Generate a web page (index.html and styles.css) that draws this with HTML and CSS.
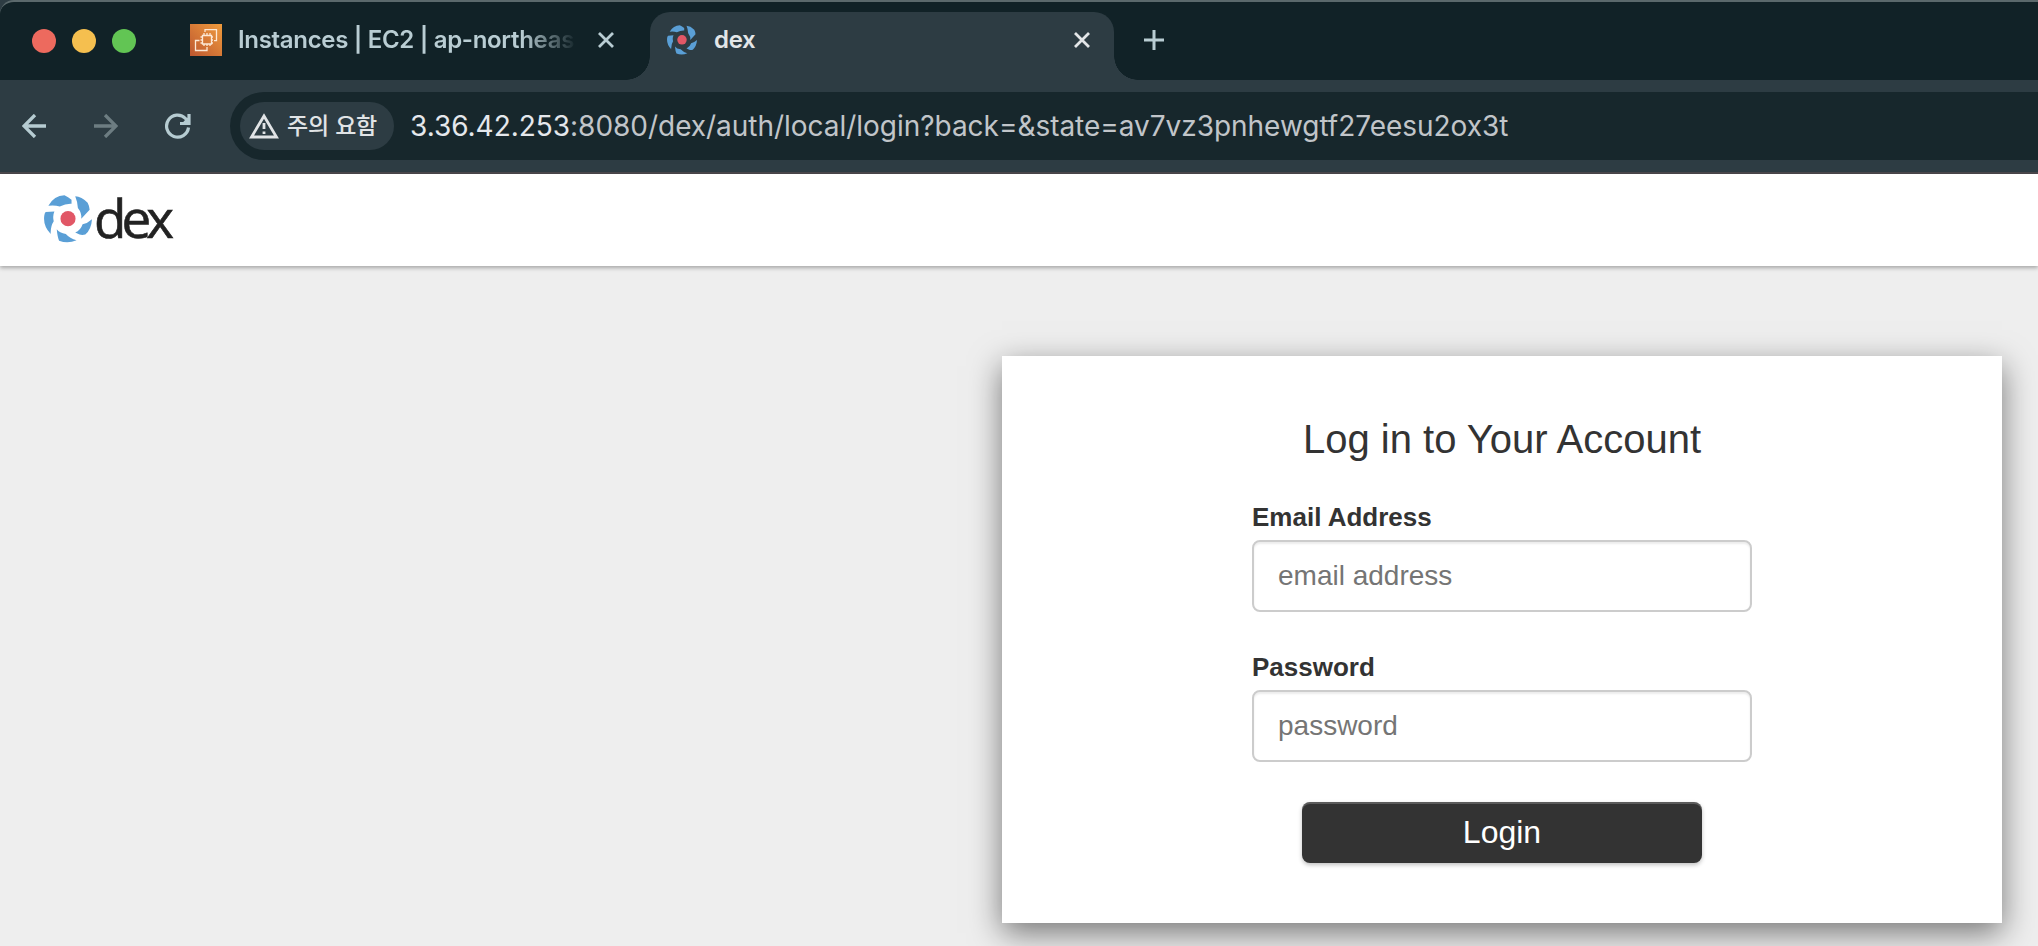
FILE: index.html
```html
<!DOCTYPE html>
<html lang="ko">
<head>
<meta charset="utf-8">
<title>dex</title>
<link rel="stylesheet" href="styles.css">
</head>
<body>
<svg width="0" height="0" class="defs" aria-hidden="true">
  <symbol id="dex-mark" viewBox="132 107 143 141">
    <g fill="#5a9fd6">
      <path d="M145 138Q162 108 193 107Q204 112 214 120L214 132Q197 131 179 140Q164 136 145 138Z"/>
      <path d="M225 110Q244 111 262 129Q267 138 268 150L243 177Q245 160 233 145Q232 127 225 110Z"/>
      <path d="M275 178Q273 208 255 224Q246 226 238 224L225 218Q241 211 247 193Q262 190 275 178Z"/>
      <path d="M229 241Q202 252 177 242Q172 231 170 208Q178 219 197 222Q209 235 229 241Z"/>
      <path d="M152 222Q128 197 133 166Q134 160 137 157L163 155Q157 168 161 184Q151 199 152 222Z"/>
    </g>
    <circle cx="203.500" cy="176.500" r="22.500" fill="#e15766"/>
  </symbol>
</svg>

<header class="browser">
  <div class="tabs">
    <div class="lights"><i class="red"></i><i class="yellow"></i><i class="green"></i></div>
    <div class="tab">
      <svg class="favicon" viewBox="0 0 32 32">
        <defs><linearGradient id="ec2" x1="0" y1="1" x2="1" y2="0"><stop stop-color="#bd5730"/><stop offset="1" stop-color="#f09c3d"/></linearGradient></defs>
        <path fill="url(#ec2)" d="M0 0h32v32H0z"/>
        <g fill="none" stroke="#fce8d5" stroke-width="1.300">
          <path d="M12.500 11.500h9v8.500h-9z"/>
          <path d="M14 11V9M17 11V9M20 11V9M14 20v2M17 20v2M20 20v2M12 13h-1.500M12 16h-1.500M12 19h-1.500M21.500 13H23M21.500 16H23M21.500 19H23"/>
          <path d="M15 8V5.700h11.500v11H24M9.500 16.500h-4v10H17v-3.500"/>
        </g>
      </svg>
      <span class="tab-title">Instances | EC2 | ap-northeas</span>
      <svg class="close" viewBox="0 0 16 16"><path d="M1 1l14 14M15 1L1 15"/></svg>
    </div>
    <div class="tab active">
      <svg class="swirl"><use href="#dex-mark"/></svg>
      <span class="tab-title">dex</span>
      <svg class="close" viewBox="0 0 16 16"><path d="M1 1l14 14M15 1L1 15"/></svg>
    </div>
    <svg class="plus" viewBox="0 0 20 20"><path d="M10 0v20M0 10h20"/></svg>
  </div>
  <div class="toolbar">
    <svg class="nav" viewBox="0 0 24 24"><path d="M24 12H2M13 1L2 12l11 11"/></svg>
    <svg class="nav forward" viewBox="0 0 24 24"><path d="M0 12h22M11 1l11 11-11 11"/></svg>
    <svg class="reload" viewBox="0 0 26 26"><path d="M23.500 14.500A11 11 0 1 1 20.500 5.500l3 3.500M24 1v9.500H15M19.500 10l4-4"/></svg>
    <div class="address">
      <div class="chip">
        <svg viewBox="0 0 30 26"><path d="M15 3L27.500 24h-25z"/><path d="M15 10v6M15 18.500v2.500"/></svg>
        <span>주의 요함</span>
      </div>
      <div class="url"><span class="host">3.36.42.253</span><span class="path">:8080/dex/auth/local/login?back=&amp;state=av7vz3pnhewgtf27eesu2ox3t</span></div>
    </div>
  </div>
</header>

<nav class="navbar">
  <svg class="mark"><use href="#dex-mark"/></svg>
  <span class="wordmark">dex</span>
</nav>

<main class="page">
  <form class="card">
    <h1>Log in to Your Account</h1>
    <div class="field">
      <label for="login">Email Address</label>
      <input id="login" type="text" placeholder="email address">
    </div>
    <div class="field">
      <label for="password">Password</label>
      <input id="password" type="password" placeholder="password">
    </div>
    <button type="button">Login</button>
  </form>
</main>
</body>
</html>
```
FILE: styles.css
```css
* { box-sizing: border-box; }
body {
  margin: 0;
  height: 946px;
  overflow: hidden;
  background: #eee;
  color: #333;
  font-family: "Liberation Sans", Arial, sans-serif;
}
svg { display: block; flex: none; }
.defs { position: absolute; }

.browser {
  height: 174px;
  background: #2d3c43;
  border-bottom: 2px solid #4a474b;
  font-family: Inter, "Noto Sans CJK KR", sans-serif;
}
.tabs {
  display: flex;
  height: 80px;
  padding: 10px 0 0 32px;
  background: #112227;
  border-top: 2px solid #5b696c;
  border-top-left-radius: 14px;
}
.lights { display: flex; gap: 16px; padding-top: 17px; }
.lights i { width: 24px; height: 24px; border-radius: 50%; }
.red { background: #ed6a5e; }
.yellow { background: #f5bf4f; }
.green { background: #62c554; }

.tab {
  display: flex;
  align-items: center;
  width: 460px;
  height: 68px;
  margin-left: 54px;
  padding-bottom: 12px;
  color: #b9cdd3;
}
.favicon { width: 32px; height: 32px; }
.tab-title {
  width: 346px;
  margin: 0 14px 0 16px;
  white-space: nowrap;
  font-size: 24px;
  line-height: 32px;
  font-weight: 600;
  letter-spacing: -0.320px;
  -webkit-mask-image: linear-gradient(90deg, #000 82%, transparent 98%);
  mask-image: linear-gradient(90deg, #000 82%, transparent 98%);
}
.close { width: 16px; height: 16px; fill: none; stroke: currentColor; stroke-width: 2.800; }
.active {
  position: relative;
  width: 464px;
  margin-left: 0;
  padding-left: 17px;
  background: #2d3c43;
  border-radius: 20px 20px 0 0;
  color: #e3e6e8;
}
.active::before,
.active::after {
  content: "";
  position: absolute;
  bottom: 0;
  width: 24px;
  height: 24px;
}
.active::before { left: -24px; background: radial-gradient(circle at 0 0, transparent 23.500px, #2d3c43 24px); }
.active::after { right: -24px; background: radial-gradient(circle at 100% 0, transparent 23.500px, #2d3c43 24px); }
.active .tab-title { width: 343px; margin: 0 17px; -webkit-mask-image: none; mask-image: none; }
.swirl { width: 30px; height: 30px; }
.plus { width: 20px; height: 20px; margin: 18px 0 0 30px; stroke: #b9cdd3; stroke-width: 3; }

.toolbar { display: flex; align-items: center; height: 92px; padding-left: 22px; }
.nav { width: 24px; height: 24px; fill: none; stroke: #b6ccd2; stroke-width: 3.300; }
.forward { margin-left: 48px; stroke: #6d7d82; }
.reload { width: 26px; height: 26px; margin: 0 39px 0 47px; fill: none; stroke: #b6ccd2; stroke-width: 3.200; }
.address {
  display: flex;
  align-items: center;
  flex: 1;
  height: 68px;
  padding-left: 10px;
  background: #17272c;
  border-radius: 34px 0 0 34px;
}
.chip {
  display: flex;
  align-items: center;
  gap: 8px;
  width: 154px;
  height: 48px;
  padding-left: 9px;
  border-radius: 24px;
  background: #2d3c43;
  color: #e1e4e6;
  font: 500 23px/32px "Noto Sans CJK KR", sans-serif;
  white-space: nowrap;
}
.chip svg { width: 30px; height: 26px; fill: none; stroke: #e1e4e6; stroke-width: 2.800; }
.chip span { position: relative; top: -2px; letter-spacing: -0.200px; }
.url { margin-left: 16px; font-size: 28px; line-height: 36px; letter-spacing: -0.030px; white-space: nowrap; color: #c1c5c9; }
.host { color: #e5e8ec; }

.navbar {
  position: relative;
  display: flex;
  align-items: flex-start;
  height: 92px;
  padding: 0 0 0 44px;
  background: #fff;
  box-shadow: 0 2px 4px rgba(0, 0, 0, 0.3);
}
.mark { width: 48px; height: 48px; margin-top: 21px; }
.wordmark {
  padding-top: 7px;
  margin-left: 2px;
  color: #222;
  font-family: "Open Sans", sans-serif;
  font-size: 53px;
  line-height: 74px;
  letter-spacing: -5px;
  -webkit-text-stroke: 0.600px #222;
}

.page { display: flex; justify-content: flex-end; padding: 90px 36px 0 0; }
.card {
  display: flex;
  flex-direction: column;
  align-items: center;
  width: 1000px;
  height: 567px;
  padding-top: 60px;
  background: #fff;
  box-shadow: 0 10px 30px rgba(0, 0, 0, 0.5);
}
.card h1 { margin: 0 0 40px; font-size: 40px; line-height: 46px; font-weight: 400; }
.field { width: 500px; margin-bottom: 40px; }
.field label { display: block; height: 30px; margin-bottom: 8px; font-size: 26px; line-height: 30px; font-weight: 700; }
.field input {
  display: block;
  width: 500px;
  height: 72px;
  padding: 0 24px;
  border: 2px solid #ccc;
  border-radius: 8px;
  background: #fff;
  box-shadow: inset 0 2px 2px rgba(0, 0, 0, 0.075);
  color: #666;
  font: 28px "Liberation Sans", Arial, sans-serif;
}
.field input::placeholder { color: #757575; }
.card button {
  width: 400px;
  height: 61px;
  padding: 0;
  border: 0;
  border-radius: 8px;
  background: #333;
  color: #fff;
  font: 32px "Liberation Sans", Arial, sans-serif;
  box-shadow: 0 2px 4px rgba(0, 0, 0, 0.25), inset 0 2px 0 rgba(255, 255, 255, 0.2);
}
```
